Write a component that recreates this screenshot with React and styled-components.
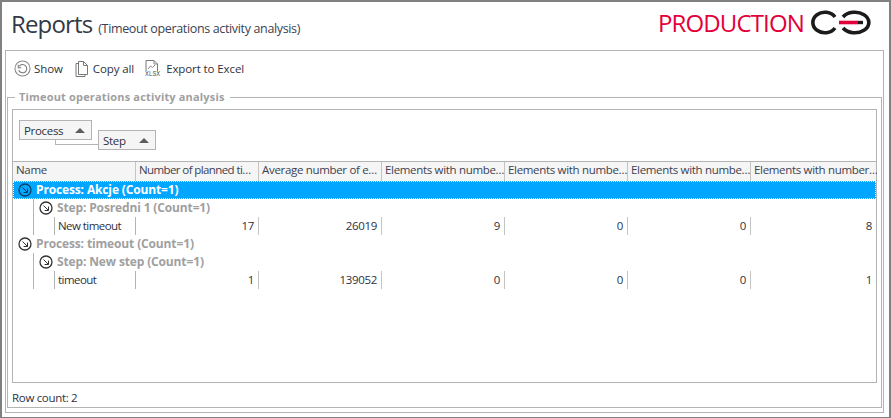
import styled, { createGlobalStyle } from "styled-components";

const GlobalStyle = createGlobalStyle`
    html, body {
        margin: 0;
        background: #fff;
    }
    * {
        box-sizing: border-box;
    }
`

const columns = "123px repeat(5, 123px) 126px";

const Window = styled.div`
    width: 891px;
    height: 418px;
    border: 2px solid #808080;
    border-bottom-width: 1px;
    background: #fff;
    display: flex;
    flex-direction: column;
    font-family: "Open Sans", "Liberation Sans", sans-serif;
    font-size: 11.5px;
    letter-spacing: -0.32px;
    color: #2f3140;
    overflow: hidden;
`

const Header = styled.header`
    height: 48px;
    flex: none;
    display: flex;
    align-items: flex-start;
    justify-content: space-between;
    padding: 6px 15px 0 9px;
`

const TitleBox = styled.div`
    display: flex;
    align-items: baseline;
    gap: 6px;
`

const Title = styled.h1`
    margin: 0;
    font-size: 24px;
    font-weight: 400;
    line-height: 32px;
    letter-spacing: -0.85px;
    color: #333a46;
`

const Subtitle = styled.span`
    font-size: 12.5px;
    letter-spacing: -0.35px;
    color: #3c4250;
`

const Brand = styled.div`
    display: flex;
    align-items: center;
    gap: 6px;
    height: 30px;
`

const BrandText = styled.span`
    font-size: 24px;
    line-height: 30px;
    letter-spacing: -0.85px;
    color: #e2003b;
`

const Panel = styled.main`
    flex: 1;
    min-height: 0;
    margin: 0 5px 4px 3px;
    border: 1px solid #b4b4b4;
    padding: 0 1px 4px 1px;
    display: flex;
    flex-direction: column;
`

const Toolbar = styled.div`
    height: 39px;
    flex: none;
    display: flex;
    align-items: center;
    padding: 0 0 4px 7px;
    letter-spacing: -0.1px;
`

const ToolButton = styled.div`
    display: flex;
    align-items: center;
    gap: ${(p) => p.$gap || 3}px;
    margin-right: ${(p) => p.$after || 0}px;
    white-space: nowrap;
`

const Group = styled.fieldset`
    flex: 1;
    min-height: 0;
    min-width: 0;
    margin: 0;
    border: 1px solid #b4b4b4;
    padding: 5px 4px 0 4px;
    display: flex;
    flex-direction: column;
`

const GroupLegend = styled.legend`
    margin-left: 3px;
    padding: 0 5px 0 4px;
    font-size: 11px;
    font-weight: 700;
    line-height: 14px;
    letter-spacing: 0.17px;
    color: #a0a0a0;
`

const Grid = styled.div`
    height: 274px;
    flex: none;
    border: 1px solid #b4b4b4;
    display: flex;
    flex-direction: column;
`

const GroupBar = styled.div`
    height: 51px;
    flex: none;
    display: flex;
    align-items: flex-start;
    padding: 10px 0 0 6px;
`

const Chip = styled.div`
    position: relative;
    width: ${(p) => p.$width}px;
    height: 20px;
    margin: ${(p) => p.$top || 0}px ${(p) => p.$after || 0}px 0 0;
    padding: 0 0 0 4px;
    display: flex;
    align-items: center;
    justify-content: space-between;
    background: #f5f5f5;
    border: 1px solid #b4b4b4;

    &::after {
        content: "";
        margin-right: 6px;
        border-left: 5px solid transparent;
        border-right: 5px solid transparent;
        border-bottom: 5px solid #5c5c5c;
    }
`

const Connector = styled.span`
    position: absolute;
    left: 35px;
    top: 19px;
    width: 44px;
    height: 5px;
    border-left: 1px solid #b4b4b4;
    border-bottom: 1px solid #b4b4b4;
`

const HeadRow = styled.div`
    height: 20px;
    flex: none;
    display: grid;
    grid-template-columns: ${columns};
    background: #f5f5f5;
    border-top: 1px solid #b4b4b4;
`

const HeadCell = styled.div`
    padding: 0 0 0 3px;
    line-height: 16px;
    letter-spacing: ${(p) => (p.$tight ? "-0.6px" : "inherit")};
    white-space: nowrap;
    overflow: hidden;
    border-right: ${(p) => (p.$last ? "none" : "1px solid #c4c4c4")};
    color: #3c4250;
`

const GroupRow = styled.div`
    height: 18px;
    flex: none;
    display: flex;
    align-items: center;
    gap: 4px;
    font-size: 12px;
    font-weight: 700;
    letter-spacing: -0.14px;
    white-space: nowrap;
    margin-left: ${(p) => (p.$level === 2 ? 20 : 0)}px;
    padding: 0 0 1px 5px;
    color: ${(p) => (p.$active ? "#fff" : "#a0a0a0")};
    background: ${(p) => (p.$active ? "#00a6ff" : "transparent")};
    outline: ${(p) => (p.$active ? "1px dotted #fff" : "none")};
    outline-offset: -1px;
    border-left: ${(p) => (p.$level === 2 ? "1px solid #b4b4b4" : "none")};
`

const DataRow = styled.div`
    height: 18px;
    flex: none;
    display: grid;
    grid-template-columns: ${columns};
`

const NameCell = styled.div`
    display: flex;
    margin-left: 20px;
    border-left: 1px solid #b4b4b4;
    border-right: 1px solid #b4b4b4;
    padding-left: 20px;
    line-height: 18px;
`

const NameText = styled.span`
    border-left: 1px solid #b4b4b4;
    padding-left: 3px;
    letter-spacing: -0.55px;
    white-space: nowrap;
`

const ValueCell = styled.div`
    line-height: 18px;
    text-align: right;
    padding-right: ${(p) => (p.$last ? 5 : 4)}px;
    border-right: ${(p) => (p.$last ? "none" : "1px solid #c4c4c4")};
`

const StatusBar = styled.div`
    flex: 1;
    padding: 4px 0 0 0;
    display: flex;
    align-items: center;
`

const Collapse = ({ color = "#333" }) => (
    <svg width="14" height="14" viewBox="0 0 14 14" style={{ flex: "none" }}>
        <circle cx="7" cy="7" r="6" fill="none" stroke={color} strokeWidth="1.3" />
        <path d="M4.5 4.5 L9.3 9.3 M9.5 5.6 V9.5 H5.6" fill="none" stroke={color} strokeWidth="1" />
    </svg>
)

const Logo = () => (
    <svg width="64" height="26" viewBox="0 1 64 26">
        <path d="M25 8 A12 10.3 0 1 0 25 19" fill="none" stroke="#1b1b1b" strokeWidth="3.6" />
        <path d="M33 8 A14 10.3 0 1 1 33 19" fill="none" stroke="#1b1b1b" strokeWidth="3.6" />
        <path d="M48 13.5 H53" stroke="#1b1b1b" strokeWidth="3.4" />
        <path d="M29 13.5 H48" stroke="#e2003b" strokeWidth="3.6" />
    </svg>
)

const ShowIcon = () => (
    <svg width="17" height="17" viewBox="0 0 18 18">
        <circle cx="9" cy="9" r="8" fill="none" stroke="#8a8a8a" strokeWidth="1.1" />
        <path d="M5.6 6.5 A4.4 4.4 0 1 1 5 10.8" fill="none" stroke="#777" strokeWidth="1.1" />
        <path d="M4.5 5 V8.2 H7.6" fill="none" stroke="#777" strokeWidth="1.1" />
    </svg>
)

const CopyIcon = () => (
    <svg width="13" height="16" viewBox="0 0 13 16">
        <path d="M3.5 2.5 H1 V15.5 H10 V13.5" fill="none" stroke="#777" strokeWidth="1" />
        <path d="M3.5 .5 H8.5 L12.5 4.5 V13.5 H3.5 Z M8.5 .5 V4.5 H12.5" fill="#fff" stroke="#777" strokeWidth="1" />
    </svg>
)

const ExcelIcon = () => (
    <svg width="17" height="17" viewBox="0 0 17 17">
        <path d="M1 11 V.5 H9 L12.5 4 V11" fill="none" stroke="#777" strokeWidth="1" />
        <path d="M9 .5 V4 H12.5 M3 9 L5.5 6 L7.5 7.5 L10 5" fill="none" stroke="#888" strokeWidth="1" />
        <text x="0" y="16" fontFamily="Liberation Mono" fontSize="6.4" fill="#555">XLSX</text>
    </svg>
)

const headers = [
    "Name",
    "Number of planned ti…",
    "Average number of e…",
    "Elements with numbe…",
    "Elements with numbe…",
    "Elements with numbe…",
    "Elements with number…",
];

const groups = [
    {
        process: "Process: Akcje (Count=1)",
        step: "Step: Posredni 1 (Count=1)",
        active: true,
        row: ["New timeout", 17, 26019, 9, 0, 0, 8],
    },
    {
        process: "Process: timeout (Count=1)",
        step: "Step: New step (Count=1)",
        row: ["timeout", 1, 139052, 0, 0, 0, 1],
    },
];

const App = () => {
    return (
        <Window>
            <GlobalStyle />
            <Header>
                <TitleBox>
                    <Title>Reports</Title>
                    <Subtitle>(Timeout operations activity analysis)</Subtitle>
                </TitleBox>
                <Brand>
                    <BrandText>PRODUCTION</BrandText>
                    <Logo />
                </Brand>
            </Header>
            <Panel>
                <Toolbar>
                    <ToolButton $gap={3} $after={12}><ShowIcon />Show</ToolButton>
                    <ToolButton $gap={5} $after={11}><CopyIcon />Copy all</ToolButton>
                    <ToolButton $gap={4}><ExcelIcon />Export to Excel</ToolButton>
                </Toolbar>
                <Group>
                    <GroupLegend>Timeout operations activity analysis</GroupLegend>
                    <Grid>
                        <GroupBar>
                            <Chip $width={73} $after={6}>
                                Process
                                <Connector />
                            </Chip>
                            <Chip $width={58} $top={10}>Step</Chip>
                        </GroupBar>
                        <HeadRow>
                            {headers.map((h, i) => (
                                <HeadCell key={i} $tight={i === 1} $last={i === headers.length - 1}>{h}</HeadCell>
                            ))}
                        </HeadRow>
                        {groups.map((g) => (
                            <div key={g.process}>
                                <GroupRow $active={g.active}>
                                    <Collapse color={g.active ? "#0c3f63" : "#333"} />
                                    {g.process}
                                </GroupRow>
                                <GroupRow $level={2}>
                                    <Collapse />
                                    {g.step}
                                </GroupRow>
                                <DataRow>
                                    <NameCell><NameText>{g.row[0]}</NameText></NameCell>
                                    {g.row.slice(1).map((v, i) => (
                                        <ValueCell key={i} $last={i === 5}>{v}</ValueCell>
                                    ))}
                                </DataRow>
                            </div>
                        ))}
                    </Grid>
                    <StatusBar>Row count: 2</StatusBar>
                </Group>
            </Panel>
        </Window>
    )
}

export default App;
